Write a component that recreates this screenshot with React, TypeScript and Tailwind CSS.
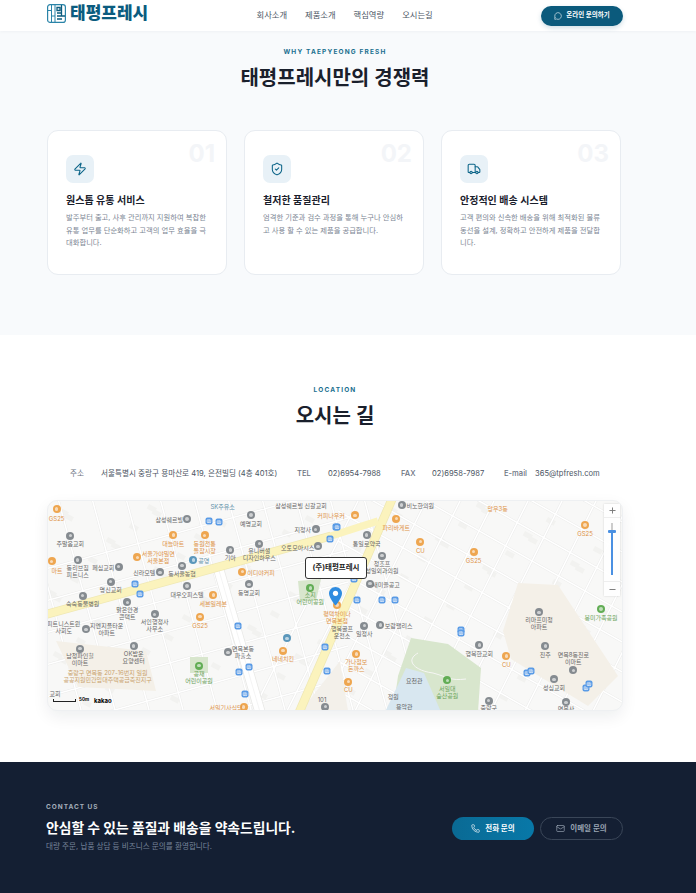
import { Zap, ShieldCheck, Truck, MessageCircle, Phone, Mail, Plus, Minus, Bus } from "lucide-react";

const FONT = "font-['Inter','Noto_Sans_CJK_KR',sans-serif]";

const cards = [
  {
    no: "01",
    icon: Zap,
    title: "원스톱 유통 서비스",
    lines: ["발주부터 출고, 사후 관리까지 지원하여 복잡한", "유통 업무를 단순화하고 고객의 업무 효율을 극", "대화합니다."],
  },
  {
    no: "02",
    icon: ShieldCheck,
    title: "철저한 품질관리",
    lines: ["엄격한 기준과 검수 과정을 통해 누구나 안심하", "고 사용 할 수 있는 제품을 공급합니다."],
  },
  {
    no: "03",
    icon: Truck,
    title: "안정적인 배송 시스템",
    lines: ["고객 편의와 신속한 배송을 위해 최적화된 물류", "동선을 설계, 정확하고 안전하게 제품을 전달합", "니다."],
  },
];

type Tone = "gray" | "orange" | "green" | "tan" | "light" | "blue";
type Place = { x: number; y: number; t?: string; tone: Tone; ix?: number; iy?: number };

// left half of the map, coordinates read off the reference crop (3x, origin 40,495)
const leftPlaces: Place[] = [
  { x: 47, y: 68, t: "GS25", tone: "orange", ix: 47, iy: 42 },
  { x: 88, y: 145, t: "주말옴교회", tone: "gray", ix: 88, iy: 122 },
  { x: 385, y: 72, t: "삼성쉐르빌", tone: "gray", ix: 438, iy: 72 },
  { x: 545, y: 33, t: "SK주유소", tone: "blue" },
  { x: 630, y: 85, t: "예명교회", tone: "gray", ix: 630, iy: 60 },
  { x: 780, y: 30, t: "삼성쉐르빌 신갈교회", tone: "gray" },
  { x: 870, y: 60, t: "커피나우커", tone: "orange" },
  { x: 785, y: 103, t: "지정사", tone: "gray", ix: 824, iy: 103 },
  { x: 770, y: 155, t: "오토모아시스", tone: "gray", ix: 831, iy: 154 },
  { x: 397, y: 143, t: "대늘마트", tone: "orange", ix: 397, iy: 120 },
  { x: 491, y: 155, t: "동원전통\n돌잡시장", tone: "orange", ix: 491, iy: 121 },
  { x: 655, y: 178, t: "유니버셜\n디자인하우스", tone: "gray", ix: 655, iy: 146 },
  { x: 352, y: 186, t: "서울가야밀면\n서울본점", tone: "orange", ix: 289, iy: 187 },
  { x: 488, y: 195, t: "공영", tone: "blue", ix: 457, iy: 195 },
  { x: 568, y: 187, t: "기아", tone: "gray", ix: 568, iy: 165 },
  { x: 110, y: 227, t: "동리브짐\n피트니스", tone: "gray", ix: 110, iy: 195 },
  { x: 187, y: 215, t: "페십교회", tone: "gray", ix: 233, iy: 215 },
  { x: 310, y: 231, t: "신라모텔", tone: "gray", ix: 357, iy: 232 },
  { x: 423, y: 235, t: "동서울농협", tone: "gray", ix: 423, iy: 212 },
  { x: 660, y: 230, t: "이디야커피", tone: "orange", ix: 604, iy: 230 },
  { x: 48, y: 224, t: "마트", tone: "orange", ix: 32, iy: 199 },
  { x: 209, y: 283, t: "명신교회", tone: "gray", ix: 209, iy: 260 },
  { x: 125, y: 325, t: "숙숙동물병원", tone: "gray", ix: 125, iy: 302 },
  { x: 438, y: 296, t: "대우오피스텔", tone: "gray", ix: 438, iy: 273 },
  { x: 624, y: 290, t: "동명교회", tone: "gray", ix: 624, iy: 268 },
  { x: 517, y: 323, t: "세븐일레븐", tone: "orange", ix: 517, iy: 300 },
  { x: 259, y: 355, t: "맑은안경\n콘택트", tone: "gray", ix: 259, iy: 322 },
  { x: 341, y: 390, t: "서인행정사\n사무소", tone: "gray", ix: 341, iy: 358 },
  { x: 477, y: 389, t: "GS25", tone: "orange", ix: 477, iy: 365 },
  { x: 68, y: 397, t: "피트니스트윈\n사회도", tone: "gray" },
  { x: 197, y: 402, t: "지엔지플타운\n아파트", tone: "gray", ix: 135, iy: 403 },
  { x: 117, y: 493, t: "남청파인힐\n이마트", tone: "gray", ix: 117, iy: 461 },
  { x: 278, y: 487, t: "OK밥운\n요양센터", tone: "gray", ix: 278, iy: 453 },
  { x: 606, y: 471, t: "면목본동\n파출소", tone: "gray", ix: 561, iy: 472 },
  { x: 726, y: 490, t: "네네치킨", tone: "orange", ix: 726, iy: 467 },
  { x: 738, y: 430, tone: "blue", ix: 738, iy: 430 },
  { x: 474, y: 545, t: "공재\n어린이공원", tone: "green", ix: 474, iy: 512 },
  { x: 200, y: 543, t: "중랑구 면목동 207-16번지 일원\n공공지원민간임대주택공급촉진지구", tone: "tan" },
  { x: 42, y: 593, t: "교회", tone: "gray" },
  { x: 555, y: 636, t: "서일기사식당", tone: "orange", ix: 608, iy: 636 },
  { x: 808, y: 310, t: "소지\n어린이공원", tone: "green", ix: 808, iy: 279 },
  { x: 843, y: 612, t: "101", tone: "gray", ix: 853, iy: 635 },
  { x: 888, y: 365, t: "평택차이나\n면목본점", tone: "orange", ix: 888, iy: 330 },
];

// right half, crop origin 330,495
const rightPlaces: Place[] = [
  { x: 268, y: 30, t: "비노한의원", tone: "gray", ix: 212, iy: 30 },
  { x: 500, y: 38, t: "망우3동", tone: "orange" },
  { x: 72, y: 61, tone: "orange", ix: 72, iy: 61 },
  { x: 196, y: 95, t: "파리바게트", tone: "orange", ix: 196, iy: 71 },
  { x: 107, y: 143, t: "통일로약국", tone: "gray", ix: 107, iy: 120 },
  { x: 268, y: 164, t: "CU", tone: "orange", ix: 268, iy: 140 },
  { x: 428, y: 194, t: "GS25", tone: "orange", ix: 428, iy: 170 },
  { x: 762, y: 115, t: "GS25", tone: "orange", ix: 762, iy: 90 },
  { x: 153, y: 215, t: "청조프\n성일외과의원", tone: "gray", ix: 153, iy: 182 },
  { x: 165, y: 266, t: "새미을공고", tone: "gray", ix: 117, iy: 266 },
  { x: 810, y: 365, t: "봉미가족공원", tone: "green", ix: 810, iy: 342 },
  { x: 33, y: 410, t: "행복골프\n운전소", tone: "gray" },
  { x: 100, y: 415, t: "일정사", tone: "gray", ix: 100, iy: 392 },
  { x: 203, y: 390, t: "보람팰리스", tone: "gray", ix: 148, iy: 390 },
  { x: 624, y: 385, t: "리마프미청\n아파트", tone: "gray", ix: 624, iy: 352 },
  { x: 445, y: 473, t: "행복한교회", tone: "gray", ix: 445, iy: 450 },
  { x: 76, y: 510, t: "가나점보\n돈까스", tone: "orange", ix: 76, iy: 477 },
  { x: 526, y: 506, t: "CU", tone: "orange", ix: 526, iy: 483 },
  { x: 643, y: 476, t: "진주", tone: "gray", ix: 643, iy: 453 },
  { x: 727, y: 490, t: "면목8동진로\n이마트", tone: "gray", ix: 727, iy: 526 },
  { x: 669, y: 577, t: "성심교회", tone: "gray", ix: 669, iy: 553 },
  { x: 52, y: 583, t: "CU", tone: "orange", ix: 52, iy: 560 },
  { x: 349, y: 590, t: "서일대\n숲산공원", tone: "green", ix: 349, iy: 556 },
  { x: 473, y: 636, t: "중랑구", tone: "gray", ix: 473, iy: 617 },
  { x: 705, y: 640, t: "면목사", tone: "gray", ix: 705, iy: 622 },
  { x: 250, y: 555, t: "요천관", tone: "gray" },
  { x: 187, y: 603, t: "정원", tone: "gray" },
  { x: 220, y: 632, t: "용악관", tone: "gray" },
];

const leftBus = [[503, 77], [535, 82], [886, 96], [866, 132], [281, 268], [296, 297], [591, 392], [595, 530], [623, 516], [612, 597], [853, 455], [857, 527]];
const rightBus = [[17, 96], [69, 252], [77, 315], [153, 315], [192, 315], [390, 405], [390, 415], [588, 533], [600, 528], [765, 578], [773, 567]];

const toLeft = (x: number, y: number) => [-7 + x / 3, -6 + y / 3];
const toRight = (x: number, y: number) => [283 + x / 3, -6 + y / 3];

const textColor: Record<Tone, string> = {
  gray: "text-[#666]",
  orange: "text-[#de9348]",
  green: "text-[#6aa35a]",
  tan: "text-[#c9a26c]",
  light: "text-[#777]",
  blue: "text-[#5c8fa8]",
};
const dotColor: Record<Tone, string> = {
  gray: "bg-[#858b90]",
  orange: "bg-[#eea650]",
  green: "bg-[#62ad55]",
  tan: "bg-[#b5926a]",
  light: "bg-[#b5b5b5]",
  blue: "bg-[#5b97bb]",
};

// street grid: two families of parallel lines
const streetsA = Array.from({ length: 12 }, (_, i) => {
  const x = -60 + i * 34;
  return `M${x} -10 L${x + 62} 220`;
});
const streetsB = Array.from({ length: 16 }, (_, i) => {
  const y = -120 + i * 32;
  return `M-10 ${y + 190} L300 ${y + 105}`;
});
const streetsC = Array.from({ length: 15 }, (_, i) => {
  const y = -140 + i * 30;
  return `M290 ${y} L590 ${y + 170}`;
});
const streetsD = Array.from({ length: 14 }, (_, i) => {
  const x = 200 + i * 34;
  return `M${x} 220 L${x + 115} -10`;
});
const streets = [...streetsA, ...streetsB, ...streetsC, ...streetsD];

// faint building footprints
const blocks = Array.from({ length: 110 }, (_, i) => ({
  x: (i * 47 + 13) % 570,
  y: (i * 29 + 7) % 205,
}));

function MapLabel({ p, to }: { p: Place; to: (x: number, y: number) => number[] }) {
  const [x, y] = to(p.x, p.y);
  const icon = p.ix !== undefined && p.iy !== undefined ? to(p.ix, p.iy) : null;
  return (
    <>
      {icon && (
        <span
          className={`absolute flex size-[8px] -translate-x-1/2 -translate-y-1/2 items-center justify-center rounded-full ${dotColor[p.tone]}`}
          style={{ left: icon[0], top: icon[1] }}
        >
          <span className="size-[3.5px] rounded-full bg-white/60" />
        </span>
      )}
      {p.t && (
        <span
          className={`absolute -translate-x-1/2 -translate-y-1/2 whitespace-pre text-center text-[6px] leading-[7px] ${textColor[p.tone]}`}
          style={{ left: x, top: y }}
        >
          {p.t}
        </span>
      )}
    </>
  );
}

function BusStop({ pos }: { pos: number[] }) {
  return (
    <span
      className="absolute flex size-[7px] -translate-x-1/2 -translate-y-1/2 items-center justify-center rounded-[2px] bg-[#5a9be6] text-white"
      style={{ left: pos[0], top: pos[1] }}
    >
      <Bus size={5} strokeWidth={2} />
    </span>
  );
}

function KakaoMap() {
  return (
    <div className="relative h-[211px] overflow-hidden rounded-[10px] border border-[#eef0f2] bg-[#f8f8f7] shadow-[0_6px_16px_rgba(15,23,42,0.07)]">
      <svg className="absolute inset-0" width="576" height="211" viewBox="0 0 576 211">
        {blocks.map((b, i) => (
          <rect key={i} x={b.x} y={b.y} width="9" height="5" fill="#f2f2f0" transform={`rotate(28 ${b.x} ${b.y})`} />
        ))}
        <path d={streets.join(" ")} stroke="#ebebea" strokeWidth="2.4" fill="none" />
        <path d={streets.join(" ")} stroke="#ffffff" strokeWidth="1.5" fill="none" />

        {/* apartment grounds */}
        <path d="M8 140 L98 150 L108 190 L30 186 Z" fill="#f4f0e8" />
        <path d="M470 82 L510 84 L570 175 L540 205 L463 158 L455 130 Z" fill="#f4f0e8" />
        <path d="M253 210 L292 160 L300 210 Z" fill="#f3f0ea" />

        {/* parks */}
        <path d="M363 137 L400 143 L433 167 L430 211 L345 211 L350 175 Z" fill="#d8e6cd" />
        <path d="M337 211 L358 167 L376 172 L393 211 Z" fill="#d8e7f0" />
        <path d="M370 152 C356 160 368 170 385 172 C400 176 402 180 418 178" stroke="#f6f6f4" strokeWidth="1" fill="none" />
        <path d="M250 80 L273 78 L268 100 L252 100 Z" fill="#d8e6cd" />
        <path d="M142 156 L160 156 L160 172 L142 172 Z" fill="#d8e6cd" />

        {/* wide white road */}
        <path d="M170 66 L212 211" stroke="#e8e8e6" strokeWidth="11" fill="none" />
        <path d="M170 66 L212 211" stroke="#ffffff" strokeWidth="9.5" fill="none" />
        <path d="M170 66 L212 211" stroke="#ececec" strokeWidth="0.6" fill="none" />

        {/* main yellow roads */}
        <path d="M-4 114 L283 35 M345 -4 L250 214" stroke="#efe8b4" strokeWidth="9" fill="none" />
        <path d="M-4 114 L283 35 L330 20 M345 -4 L250 214" stroke="#fbf3bd" strokeWidth="7.5" fill="none" />
      </svg>

      {leftPlaces.map((p, i) => (
        <MapLabel key={i} p={p} to={toLeft} />
      ))}
      {rightPlaces.map((p, i) => (
        <MapLabel key={i} p={p} to={toRight} />
      ))}
      {leftBus.map(([x, y], i) => (
        <BusStop key={i} pos={toLeft(x, y)} />
      ))}
      {rightBus.map(([x, y], i) => (
        <BusStop key={i} pos={toRight(x, y)} />
      ))}

      {/* marker + label */}
      <div className="absolute left-[257px] top-[56px] flex h-[22px] w-[62px] items-center justify-center rounded-[3px] border border-[#333] bg-white text-[7.5px] font-bold text-[#222]">
        (주)태평프레시
      </div>
      <svg className="absolute left-[281px] top-[86px]" width="13" height="19" viewBox="0 0 13 19">
        <path d="M6.5 0C2.9 0 0 2.9 0 6.4c0 4.4 6.5 12.2 6.5 12.2S13 10.8 13 6.4C13 2.9 10.1 0 6.5 0Z" fill="#2f8ce0" />
        <circle cx="6.5" cy="6.3" r="2.6" fill="#fff" />
      </svg>

      {/* zoom control */}
      <div className="absolute right-[2px] top-[3px] flex w-[16px] flex-col bg-white/90 text-[#777] shadow-[0_0_2px_rgba(0,0,0,0.15)]">
        <div className="flex h-[14px] items-center justify-center border-b border-[#eee]">
          <Plus size={9} strokeWidth={2.5} />
        </div>
        <div className="relative flex h-[63px] justify-center">
          <div className="mt-[5px] h-[7px] w-[1.5px] bg-[#ccc]" />
          <div className="absolute top-[12px] h-[45px] w-[2px] bg-[#4a90e2]" />
          <div className="absolute top-[12px] h-[3px] w-[8px] rounded-[1px] bg-[#4a90e2]" />
        </div>
        <div className="flex h-[15px] items-center justify-center border-t border-[#eee]">
          <Minus size={9} strokeWidth={2.5} />
        </div>
      </div>

      {/* scale + logo */}
      <div className="absolute bottom-[5px] left-[5px] flex items-center gap-[3px] text-black">
        <div className="h-[3px] w-[23px] border-x border-b border-[#222]" />
        <span className="text-[4.5px] font-bold">50m</span>
        <span className="ml-[2px] text-[6px] font-bold">kakao</span>
      </div>
    </div>
  );
}

function Eyebrow({ children }: { children: string }) {
  return <p className="text-center text-[6.5px] font-bold leading-[8px] tracking-[0.18em] text-[#1a6f8f]">{children}</p>;
}

export default function App() {
  return (
    <div className={`h-[893px] w-[696px] overflow-hidden bg-white ${FONT}`}>
      <header className="relative z-10 flex h-[31px] items-center justify-between bg-white pl-[47px] pr-[73px] shadow-[0_1px_3px_rgba(15,23,42,0.04)]">
        <div className="flex -translate-y-[2px] items-center gap-[4px]">
          <svg width="19" height="19" viewBox="0 0 19 19" fill="none">
            <rect x="0.6" y="0.6" width="17.8" height="17.8" rx="2.5" stroke="#2a84a8" strokeWidth="1.2" />
            <path d="M4.5 1v17M8 1v17M1 6.5h3.5M4.5 12h3.5" stroke="#2a84a8" strokeWidth="1" />
            <path d="M10 3.5h3v3h-3zM14.5 1v11M10 9h4.5M10 12h8M10 15h5" stroke="#0b5c7f" strokeWidth="1.3" />
          </svg>
          <span className="text-[17px] font-black leading-none text-[#0b5c7f]">태평프레시</span>
        </div>
        <nav className="flex gap-[18px] text-[8.3px] text-[#4b5563]">
          <span>회사소개</span>
          <span>제품소개</span>
          <span>핵심역량</span>
          <span>오시는길</span>
        </nav>
        <button className="flex h-[20px] w-[82px] items-center justify-center gap-[4px] rounded-full bg-[#0b5a7c] text-[6.5px] font-bold text-white shadow-[0_2px_5px_rgba(11,90,124,0.2)]">
          <MessageCircle size={8} strokeWidth={1.8} />
          온라인 문의하기
        </button>
      </header>

      <section className="h-[304px] bg-[#f8fafc] pt-[17px]">
        <div className="w-[670px]">
          <Eyebrow>WHY TAEPYEONG FRESH</Eyebrow>
          <h2 className="mt-[8px] text-center text-[20px] font-semibold leading-[28px] text-[#1a202c]">태평프레시만의 경쟁력</h2>
          <div className="ml-[47px] mt-[38px] grid grid-cols-[repeat(3,180px)] gap-[17px]">
            {cards.map((c) => (
              <article key={c.no} className="relative h-[145px] rounded-[11px] border border-[#e8ecf1] bg-white px-[18px] pt-[24px]">
                <span className="absolute right-[11px] top-[8px] text-[24px] font-bold leading-[30px] text-[#f3f5f8]">{c.no}</span>
                <div className="flex size-[28px] items-center justify-center rounded-[7px] bg-[#e8f1f7] text-[#0b6488]">
                  <c.icon size={14} strokeWidth={1.8} />
                </div>
                <h3 className="mt-[10px] text-[10px] font-semibold leading-[14px] text-[#1a202c]">{c.title}</h3>
                <p className="mt-[5px] whitespace-nowrap text-[7.3px] leading-[12.5px] text-[#7c8694]">
                  {c.lines.map((l) => (
                    <span key={l} className="block">{l}</span>
                  ))}
                </p>
              </article>
            ))}
          </div>
        </div>
      </section>

      <section className="h-[427px] bg-white pt-[51px]">
        <div className="w-[670px]">
          <Eyebrow>LOCATION</Eyebrow>
          <h2 className="mt-[8px] text-center text-[20px] font-semibold leading-[28px] text-[#1a202c]">오시는 길</h2>
          <div className="mt-[38px] flex h-[12px] items-center whitespace-nowrap pl-[70px] text-[7.6px] text-[#4b5563]">
            <span className="w-[31px] text-[#6b7280]">주소</span>
            <span className="w-[196px]">서울특별시 중랑구 용마산로 419, 은전빌딩 (4층 401호)</span>
            <span className="w-[31px] font-medium text-[#6b7280]">TEL</span>
            <span className="w-[73px]">02)6954-7988</span>
            <span className="w-[31px] font-medium text-[#6b7280]">FAX</span>
            <span className="w-[72px]">02)6958-7987</span>
            <span className="w-[31px] font-medium text-[#6b7280]">E-mail</span>
            <span>365@tpfresh.com</span>
          </div>
          <div className="mx-[47px] mt-[20px]">
            <KakaoMap />
          </div>
        </div>
      </section>

      <section className="flex h-[131px] items-start justify-between bg-[#141f33] pl-[46px] pr-[73px] pt-[41px]">
        <div>
          <p className="text-[6.5px] font-bold leading-[8px] tracking-[0.15em] text-[#a3adba]">CONTACT US</p>
          <h2 className="mt-[7px] text-[13.8px] font-bold leading-[20px] text-white">안심할 수 있는 품질과 배송을 약속드립니다.</h2>
          <p className="mt-[4px] text-[7.6px] leading-[10px] text-[#76849a]">대량 주문, 납품 상담 등 비즈니스 문의를 환영합니다.</p>
        </div>
        <div className="mt-[14px] flex gap-[6px]">
          <button className="flex h-[23px] w-[82px] items-center justify-center gap-[5px] rounded-full bg-gradient-to-r from-[#0a6a94] to-[#0878a8] text-[7.5px] font-bold text-white">
            <Phone size={9} strokeWidth={1.8} />
            전화 문의
          </button>
          <button className="flex h-[23px] w-[83px] items-center justify-center gap-[5px] rounded-full border border-[#3a4658] text-[7.5px] font-semibold text-[#9aa5b4]">
            <Mail size={9} strokeWidth={1.8} />
            이메일 문의
          </button>
        </div>
      </section>
    </div>
  );
}
